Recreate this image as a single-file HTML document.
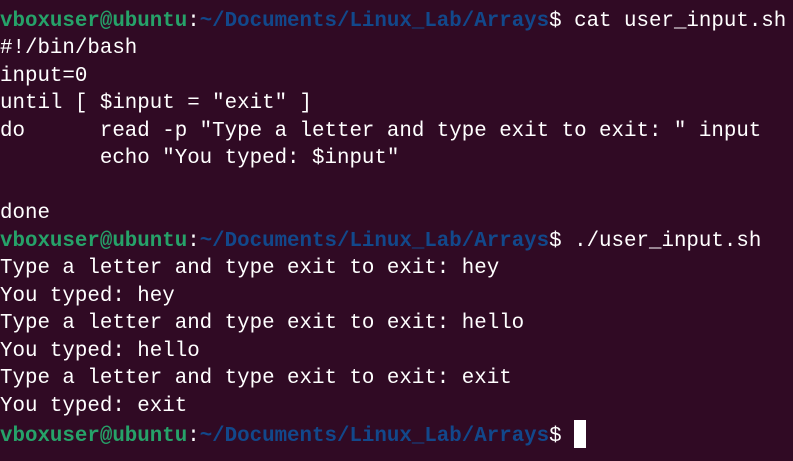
<!DOCTYPE html>
<html><head><meta charset="utf-8"><style>
html,body{margin:0;padding:0;background:#300a24;width:793px;height:461px;overflow:hidden}
pre{margin:0;position:absolute;left:0;top:8px;font-family:"Liberation Mono","DejaVu Sans Mono",monospace;font-size:20.8px;line-height:27.47px;color:#ffffff;white-space:pre}
.g{color:#26a269;font-weight:bold}.b{color:#12488b;font-weight:bold}
.c{display:inline-block;width:12px;height:28px;background:#fff;vertical-align:-7px}
</style></head><body><pre><span class="g">vboxuser@ubuntu</span>:<span class="b">~/Documents/Linux_Lab/Arrays</span>$ cat user_input.sh
#!/bin/bash
input=0
until [ $input = "exit" ]
do      read -p "Type a letter and type exit to exit: " input
        echo "You typed: $input"

done
<span class="g">vboxuser@ubuntu</span>:<span class="b">~/Documents/Linux_Lab/Arrays</span>$ ./user_input.sh
Type a letter and type exit to exit: hey
You typed: hey
Type a letter and type exit to exit: hello
You typed: hello
Type a letter and type exit to exit: exit
You typed: exit
<span class="g">vboxuser@ubuntu</span>:<span class="b">~/Documents/Linux_Lab/Arrays</span>$ <span class="c"></span></pre></body></html>
